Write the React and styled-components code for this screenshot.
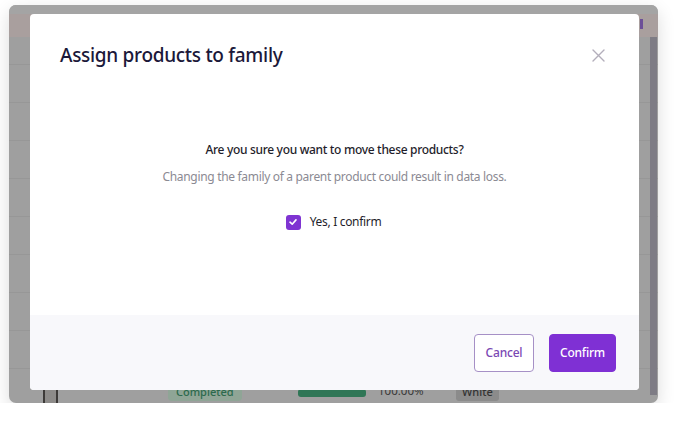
import styled, { createGlobalStyle } from 'styled-components';

const GlobalStyle = createGlobalStyle`
  body {
    margin: 0;
    background: #ffffff;
    font-family: "Noto Sans", "Open Sans", sans-serif;
  }
`;

const rows = [28, 38, 38, 38, 38, 38, 38, 38, 38];

function CloseIcon() {
  return (
    <svg width="13" height="13" viewBox="0 0 13 13" fill="none">
      <path d="M1 1L12 12M12 1L1 12" stroke="#b3aebb" strokeWidth="1.4" strokeLinecap="round" />
    </svg>
  );
}

function CheckIcon() {
  return (
    <svg width="10" height="10" viewBox="0 0 10 10" fill="none">
      <path d="M2 5.2L4.2 7.2L8 2.9" stroke="#fff" strokeWidth="1.6" strokeLinecap="round" strokeLinejoin="round" />
    </svg>
  );
}

function App() {
  return (
    <>
      <GlobalStyle />
      <Window>
        <TopStrip />
        <HeaderRow>
          <HeaderMark />
        </HeaderRow>
        {rows.map((h, i) => (
          <Row key={i} $height={h} />
        ))}
        <ProductRow>
          <Phone />
          <div><Badge>Completed</Badge></div>
          <Bar />
          <Percent>100.00%</Percent>
          <div><Tag>White</Tag></div>
        </ProductRow>
        <Scrollbar />

        <Modal>
          <ModalBody>
            <ModalHeader>
              <Title>Assign products to family</Title>
              <CloseButton><CloseIcon /></CloseButton>
            </ModalHeader>
            <Content>
              <Question>Are you sure you want to move these products?</Question>
              <Hint>Changing the family of a parent product could result in data loss.</Hint>
              <CheckRow>
                <Checkbox><CheckIcon /></Checkbox>
                <CheckLabel>Yes, I confirm</CheckLabel>
              </CheckRow>
            </Content>
          </ModalBody>
          <Footer>
            <Button $width={60}>Cancel</Button>
            <Button $primary $width={67}>Confirm</Button>
          </Footer>
        </Modal>
      </Window>
    </>
  );
}

export default App;

const Window = styled.div`
  position: relative;
  margin: 5px 0 0 9px;
  width: 649px;
  height: 398px;
  border-radius: 7px;
  overflow: hidden;
  background: #9f9f9f;
  box-shadow: 0 6px 18px rgba(0, 0, 0, 0.14);
`;

const TopStrip = styled.div`
  height: 9px;
  background: #a4a4a4;
`;

const HeaderRow = styled.div`
  position: relative;
  height: 23px;
  background: #a99f9e;
`;

const HeaderMark = styled.span`
  position: absolute;
  left: 631px;
  top: 5px;
  width: 3px;
  height: 10px;
  background: #6c4f98;
`;

const Row = styled.div`
  height: ${(p) => p.$height}px;
  box-sizing: border-box;
  border-bottom: 1px solid #979797;
`;

const ProductRow = styled.div`
  display: grid;
  grid-template-columns: 125px 130px 80px 78px auto;
  align-items: center;
  height: 38px;
  padding-left: 34px;
`;

const Phone = styled.div`
  width: 11px;
  height: 34px;
  margin-top: 4px;
  border: 2px solid #3d3a38;
  border-radius: 3px 3px 5px 5px;
  background: #8d8b89;
`;

const Badge = styled.span`
  display: inline-block;
  padding: 2px 8px;
  border-radius: 4px;
  background: #8fa596;
  color: #2c6a4d;
  font-size: 11px;
  font-weight: 500;
`;

const Bar = styled.div`
  width: 68px;
  height: 8px;
  margin-top: 6px;
  border-radius: 3px;
  background: #2f7656;
`;

const Percent = styled.span`
  color: #383838;
  font-size: 11.5px;
`;

const Tag = styled.span`
  display: inline-block;
  padding: 2px 6px;
  border-radius: 3px;
  background: #8b8b8b;
  color: #333;
  font-size: 11px;
  font-weight: 500;
`;

const Scrollbar = styled.div`
  position: absolute;
  right: 1px;
  top: 32px;
  bottom: 8px;
  width: 7px;
  background: #7e7c85;
`;

const Modal = styled.div`
  position: absolute;
  left: 21px;
  top: 9px;
  width: 609px;
  height: 376px;
  display: flex;
  flex-direction: column;
  background: #ffffff;
  border-radius: 4px;
  overflow: hidden;
`;

const ModalBody = styled.div`
  flex: 1;
`;

const ModalHeader = styled.div`
  display: flex;
  justify-content: space-between;
  align-items: center;
  padding: 27px 34px 0 30px;
`;

const Title = styled.h2`
  margin: 0;
  font-size: 19px;
  line-height: 28px;
  font-weight: 500;
  letter-spacing: -0.3px;
  color: #1b1839;
`;

const CloseButton = styled.button`
  display: flex;
  padding: 0;
  border: none;
  background: none;
  cursor: pointer;
`;

const Content = styled.div`
  display: flex;
  flex-direction: column;
  align-items: center;
  padding-top: 71px;
  letter-spacing: -0.32px;
`;

const Question = styled.p`
  margin: 0;
  font-size: 12px;
  line-height: 20px;
  font-weight: 500;
  color: #1f1e2b;
`;

const Hint = styled.p`
  margin: 7px 0 0;
  font-size: 12px;
  line-height: 20px;
  color: #8b8a93;
`;

const CheckRow = styled.label`
  display: flex;
  align-items: center;
  gap: 9px;
  margin-top: 25px;
  margin-right: 2px;
`;

const Checkbox = styled.span`
  display: flex;
  align-items: center;
  justify-content: center;
  width: 15px;
  height: 15px;
  border-radius: 3px;
  background: #7f34d2;
`;

const CheckLabel = styled.span`
  font-size: 12px;
  line-height: 20px;
  color: #1f1e2b;
`;

const Footer = styled.div`
  display: flex;
  justify-content: flex-end;
  align-items: center;
  gap: 15px;
  height: 75px;
  padding-right: 23px;
  background: #f8f8fb;
`;

const Button = styled.button`
  width: ${(p) => p.$width}px;
  height: 38px;
  padding: 0;
  border-radius: 4px;
  border: 1px solid ${(p) => (p.$primary ? '#7f30d4' : '#a690c6')};
  background: ${(p) => (p.$primary ? '#7f30d4' : '#ffffff')};
  color: ${(p) => (p.$primary ? '#ffffff' : '#7a48b3')};
  font-family: "Noto Sans", "Open Sans", sans-serif;
  font-size: 12px;
  font-weight: 500;
  letter-spacing: -0.2px;
  cursor: pointer;
`;
